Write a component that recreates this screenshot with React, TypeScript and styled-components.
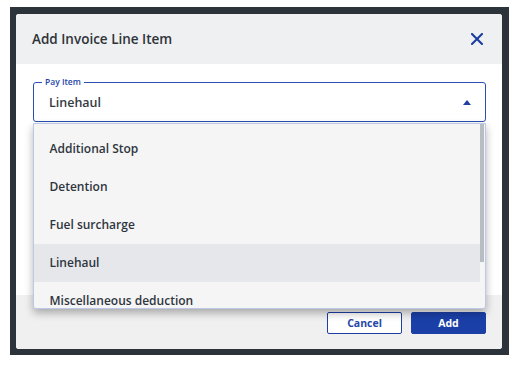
import styled, { createGlobalStyle } from "styled-components";

const GlobalStyle = createGlobalStyle`
  html, body {
    margin: 0;
    padding: 0;
    background: #fff;
  }
  body {
    font-family: "Open Sans", "Noto Sans", sans-serif;
  }
`;

const payItems: string[] = [
  "Additional Stop",
  "Detention",
  "Fuel surcharge",
  "Linehaul",
  "Miscellaneous deduction",
  "Tolls",
];

const App = () => {
  const selected = "Linehaul";
  return (
    <>
      <GlobalStyle />
      <Backdrop>
        <Dialog>
          <Header>
            <Title>Add Invoice Line Item</Title>
            <CloseBtn aria-label="Close">
              <svg width="12" height="12" viewBox="0 0 12 12">
                <path
                  d="M1 1 L11 11 M11 1 L1 11"
                  stroke="#1d3e9f"
                  strokeWidth="2.1"
                  strokeLinecap="square"
                />
              </svg>
            </CloseBtn>
          </Header>
          <Body>
            <Field>
              <Legend>Pay Item</Legend>
              <Value>{selected}</Value>
              <svg width="8" height="5" viewBox="0 0 8 5">
                <path d="M0 5 L4 0 L8 5 Z" fill="#1f3fa2" />
              </svg>
              <Menu>
                <OptionList>
                  {payItems.map((item) => (
                    <Option key={item} active={item === selected}>
                      {item}
                    </Option>
                  ))}
                </OptionList>
                <ScrollTrack>
                  <ScrollThumb />
                </ScrollTrack>
              </Menu>
            </Field>
          </Body>
          <Footer>
            <Button>Cancel</Button>
            <Button primary>Add</Button>
          </Footer>
        </Dialog>
      </Backdrop>
    </>
  );
};

const Backdrop = styled.div`
  box-sizing: border-box;
  margin: 7px 0 0 10px;
  width: 499px;
  height: 348px;
  padding: 7px 7px 6px 6px;
  background-color: #2c333b;
`;

const Dialog = styled.div`
  width: 100%;
  height: 100%;
  display: flex;
  flex-direction: column;
  background-color: #fff;
  border-radius: 3px;
  overflow: hidden;
`;

const Header = styled.div`
  height: 50px;
  flex-shrink: 0;
  display: flex;
  align-items: center;
  justify-content: space-between;
  padding: 0 19px 0 16px;
  background-color: #eef0f2;
`;

const Title = styled.h2`
  margin: 0;
  font-size: 13.5px;
  font-weight: 600;
  color: #2e3339;
`;

const CloseBtn = styled.button`
  border: 0;
  padding: 0;
  background: none;
  display: flex;
`;

const Body = styled.div`
  flex: 1;
  padding: 18px 16px 0 17px;
`;

const Field = styled.div`
  position: relative;
  box-sizing: border-box;
  height: 40px;
  display: flex;
  align-items: center;
  justify-content: space-between;
  padding: 0 14px 0 15px;
  border: 1.5px solid #2a4eb3;
  border-radius: 3px;
`;

const Legend = styled.span`
  position: absolute;
  top: -7px;
  left: 8px;
  padding: 0 3px;
  background: #fff;
  font-size: 8.5px;
  font-weight: 600;
  line-height: 12px;
  color: #2446a8;
`;

const Value = styled.span`
  font-size: 12.5px;
  font-weight: 600;
  color: #343a42;
`;

const Menu = styled.div`
  position: absolute;
  top: 39.5px;
  left: -1.5px;
  box-sizing: border-box;
  width: 453px;
  height: 186px;
  display: flex;
  overflow: hidden;
  background-color: #f5f5f5;
  border: 1px solid #bcc8e6;
  border-radius: 0 0 3px 3px;
  box-shadow: 0 4px 8px rgba(0, 0, 0, 0.3);
  z-index: 2;
`;

const OptionList = styled.ul`
  flex: 1;
  margin: 0;
  padding: 6px 0 0;
  list-style: none;
`;

const ScrollTrack = styled.div`
  width: 4px;
  margin-right: 1px;
  flex-shrink: 0;
`;

const ScrollThumb = styled.div`
  height: 138px;
  background-color: #b8bcc3;
`;

const Option = styled.li<{ active?: boolean }>`
  height: 38px;
  display: flex;
  align-items: center;
  padding-left: 16px;
  font-size: 12px;
  font-weight: 600;
  color: #2f3540;
  background-color: ${(p) => (p.active ? "#e5e7ea" : "transparent")};
`;

const Footer = styled.div`
  height: 54px;
  flex-shrink: 0;
  box-sizing: border-box;
  display: flex;
  justify-content: flex-end;
  gap: 9px;
  padding: 17px 16px 0 0;
  background-color: #f0f0f0;
`;

const Button = styled.button<{ primary?: boolean }>`
  box-sizing: border-box;
  width: 75px;
  height: 22px;
  border-radius: 2px;
  border: 1.5px solid #1e40a6;
  font-family: "Open Sans", "Noto Sans", sans-serif;
  font-size: 10.5px;
  font-weight: 700;
  color: ${(p) => (p.primary ? "#fff" : "#2548a8")};
  background-color: ${(p) => (p.primary ? "#1a3fa7" : "#fff")};
`;

export default App;
